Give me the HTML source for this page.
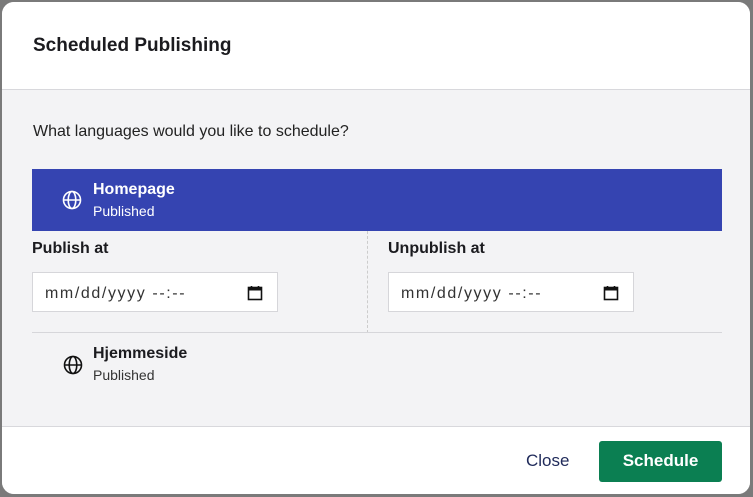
<!DOCTYPE html><html><head><style>
body{margin:0;width:753px;height:497px;background:#7a7a7a;font-family:"Liberation Sans",sans-serif;overflow:hidden;position:relative}
.d{position:absolute;left:2px;top:2px;width:748px;height:492px;border-radius:12px;background:#f3f3f5;overflow:hidden}
.h{height:87px;background:#fff;border-bottom:1px solid #d8d8dc;box-sizing:content-box}
.h div{position:absolute;left:31px;top:33px;font-size:19px;font-weight:bold;color:#1b1b1f}
.q{position:absolute;left:31px;top:121px;font-size:16px;color:#222}
.sel{position:absolute;left:30px;top:167px;width:690px;height:62px;background:#3544b1;color:#fff}
.n{position:absolute;left:61px;font-size:16px;font-weight:bold}
.s{position:absolute;left:61px;font-size:14px}
.g{position:absolute;left:30px;width:20px;height:20px}
.lbl{position:absolute;top:238px;font-size:16px;font-weight:bold;color:#1b1b1f}
.in{position:absolute;top:270px;width:246px;height:40px;background:#fff;border:1px solid #d6d6da;box-sizing:border-box;font-size:16px;color:#333;padding:12px 0 0 12px;letter-spacing:1.6px}
.in svg{position:absolute;right:14px;top:12px}
.vl{position:absolute;left:365px;top:229px;height:102px;border-left:1px dashed #ccc}
.hl{position:absolute;left:30px;top:330px;width:690px;border-top:1px solid #d6d6da}
.f{position:absolute;left:0;top:424px;width:748px;height:68px;background:#fff;border-top:1px solid #d8d8dc}
.c{position:absolute;left:524px;top:24px;font-size:17px;color:#1f2a5a}
.b{position:absolute;left:597px;top:14px;width:123px;height:41px;background:#0b7f52;border-radius:3px;color:#fff;font-weight:bold;font-size:17px;text-align:center;line-height:40px}
</style></head><body><div class="d">
<div class="h"><div>Scheduled Publishing</div></div>
<div class="q">What languages would you like to schedule?</div>
<div class="sel">
<svg class="g" style="top:21px" viewBox="0 0 20 20" fill="none" stroke="#fff" stroke-width="1.6"><circle cx="10" cy="10" r="8.5"/><ellipse cx="10" cy="10" rx="3.8" ry="8.5"/><path d="M1.5 10h17"/></svg>
<div class="n" style="top:12px">Homepage</div><div class="s" style="top:34px">Published</div></div>
<div class="lbl" style="left:30px">Publish at</div>
<div class="lbl" style="left:386px">Unpublish at</div>
<div class="in" style="left:30px">mm/dd/yyyy --:--<svg width="16" height="16" viewBox="0 0 16 16"><rect x="1.5" y="2.5" width="13" height="12" fill="none" stroke="#111" stroke-width="1.6"/><rect x="1.5" y="2.5" width="13" height="3" fill="#111"/><path d="M4.5 1v3M11.5 1v3" stroke="#111" stroke-width="1.6"/></svg></div>
<div class="in" style="left:386px">mm/dd/yyyy --:--<svg width="16" height="16" viewBox="0 0 16 16"><rect x="1.5" y="2.5" width="13" height="12" fill="none" stroke="#111" stroke-width="1.6"/><rect x="1.5" y="2.5" width="13" height="3" fill="#111"/><path d="M4.5 1v3M11.5 1v3" stroke="#111" stroke-width="1.6"/></svg></div>
<div class="vl"></div><div class="hl"></div>
<svg class="g" style="left:61px;top:353px" viewBox="0 0 20 20" fill="none" stroke="#111" stroke-width="1.6"><circle cx="10" cy="10" r="8.5"/><ellipse cx="10" cy="10" rx="3.8" ry="8.5"/><path d="M1.5 10h17"/></svg>
<div class="n" style="left:91px;top:343px;color:#1b1b1f">Hjemmeside</div><div class="s" style="left:91px;top:365px;color:#333">Published</div>
<div class="f"><div class="c">Close</div><div class="b">Schedule</div></div>
</div></body></html>
